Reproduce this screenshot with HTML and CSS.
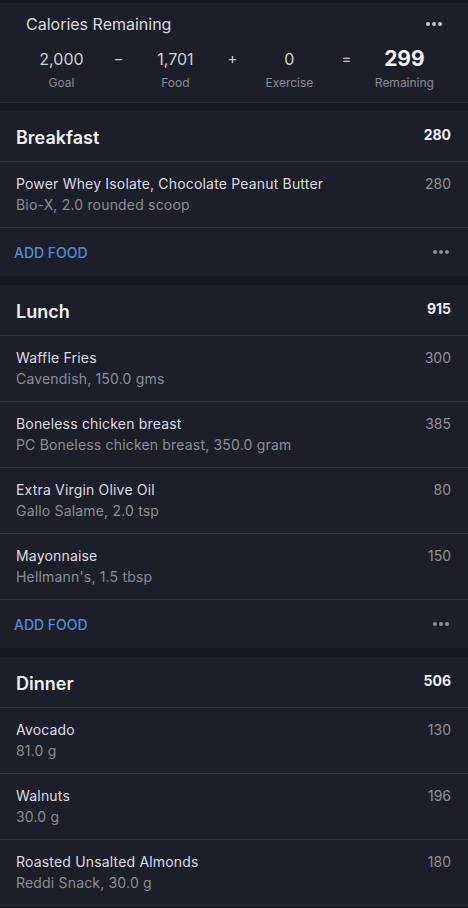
FILE: index.html
```html
<!DOCTYPE html>
<html>
<head>
<meta charset="utf-8">
<link rel="stylesheet" href="styles.css">
</head>
<body>
<div class="page">
  <section class="summary">
    <div class="summary-top">
      <span class="summary-title">Calories Remaining</span>
      <span class="dots"><i></i><i></i><i></i></span>
    </div>
    <div class="equation">
      <div class="cell"><span class="val">2,000</span><span class="lbl">Goal</span></div>
      <div class="op">−</div>
      <div class="cell"><span class="val">1,701</span><span class="lbl">Food</span></div>
      <div class="op">+</div>
      <div class="cell"><span class="val">0</span><span class="lbl">Exercise</span></div>
      <div class="op">=</div>
      <div class="cell"><span class="val big">299</span><span class="lbl">Remaining</span></div>
    </div>
  </section>

  <section class="meal">
    <div class="meal-head"><span class="meal-name">Breakfast</span><span class="meal-cal">280</span></div>
    <div class="item"><div class="item-text"><span class="item-name">Power Whey Isolate, Chocolate Peanut Butter</span><span class="item-sub">Bio-X, 2.0 rounded scoop</span></div><span class="item-cal">280</span></div>
    <div class="add-row"><span class="add">ADD FOOD</span><span class="dots small"><i></i><i></i><i></i></span></div>
  </section>

  <section class="meal">
    <div class="meal-head"><span class="meal-name">Lunch</span><span class="meal-cal">915</span></div>
    <div class="item"><div class="item-text"><span class="item-name">Waffle Fries</span><span class="item-sub">Cavendish, 150.0 gms</span></div><span class="item-cal">300</span></div>
    <div class="item"><div class="item-text"><span class="item-name">Boneless chicken breast</span><span class="item-sub">PC Boneless chicken breast, 350.0 gram</span></div><span class="item-cal">385</span></div>
    <div class="item"><div class="item-text"><span class="item-name">Extra Virgin Olive Oil</span><span class="item-sub">Gallo Salame, 2.0 tsp</span></div><span class="item-cal">80</span></div>
    <div class="item"><div class="item-text"><span class="item-name">Mayonnaise</span><span class="item-sub">Hellmann's, 1.5 tbsp</span></div><span class="item-cal">150</span></div>
    <div class="add-row"><span class="add">ADD FOOD</span><span class="dots small"><i></i><i></i><i></i></span></div>
  </section>

  <section class="meal">
    <div class="meal-head"><span class="meal-name">Dinner</span><span class="meal-cal">506</span></div>
    <div class="item"><div class="item-text"><span class="item-name">Avocado</span><span class="item-sub">81.0 g</span></div><span class="item-cal">130</span></div>
    <div class="item"><div class="item-text"><span class="item-name">Walnuts</span><span class="item-sub">30.0 g</span></div><span class="item-cal">196</span></div>
    <div class="item"><div class="item-text"><span class="item-name">Roasted Unsalted Almonds</span><span class="item-sub">Reddi Snack, 30.0 g</span></div><span class="item-cal">180</span></div>
  </section>
</div>
</body>
</html>
```

FILE: styles.css
```css
* { box-sizing: border-box; margin: 0; padding: 0; }
html, body { background: #161822; }
body {
  font-family: Inter, "Noto Sans", "Liberation Sans", sans-serif;
  color: #e4e5ea;
  width: 468px;
  height: 908px;
  overflow: hidden;
}
.page {
  padding-top: 3px;
  display: flex;
  flex-direction: column;
  gap: 8px;
}
.page > .meal + .meal { margin-top: 1px; }
.summary {
  background: #1c1e29;
  border-bottom: 1px solid #2e303b;
  height: 100px;
  padding: 12px 0 0 0;
}
.summary-top {
  display: flex;
  justify-content: space-between;
  align-items: center;
  padding: 0 26px 0 26px;
  height: 18px;
}
.summary-title {
  font-size: 16px;
  color: #d9dae0;
}
.dots { display: flex; gap: 2px; align-items: center; }
.dots i {
  display: block;
  width: 4px;
  height: 4px;
  border-radius: 50%;
  background: #c9cad1;
}
.dots.small i { background: #8d9099; width: 4px; height: 4px; }
.equation {
  display: grid;
  grid-template-columns: repeat(7, 1fr);
  padding: 0 34px 0 33px;
  margin-top: 14px;
}
.cell {
  display: flex;
  flex-direction: column;
  align-items: center;
}
.val {
  font-size: 16px;
  color: #cfd0d6;
  height: 24px;
  line-height: 24px;
}
.val.big {
  font-size: 21px;
  font-weight: 700;
  color: #f1f2f5;
}
.lbl {
  font-size: 12px;
  color: #8a8c95;
  margin-top: 4px;
}
.op {
  text-align: center;
  font-size: 15px;
  color: #c2c3ca;
  line-height: 24px;
}
.meal {
  background: #1c1e29;
}
.meal-head {
  height: 51px;
  display: flex;
  justify-content: space-between;
  padding: 0 17px 0 16px;
  border-bottom: 1px solid #2e303b;
}
.meal-name {
  font-size: 18px;
  font-weight: 600;
  color: #eeeff3;
  padding-top: 16px;
}
.meal-cal {
  font-size: 14px;
  font-weight: 700;
  color: #eeeff3;
  padding-top: 15px;
}
.item {
  height: 66px;
  display: flex;
  justify-content: space-between;
  padding: 13px 17px 0 16px;
  border-bottom: 1px solid #2e303b;
}
.item-text { display: flex; flex-direction: column; gap: 3px; }
.item-name { font-size: 14px; letter-spacing: 0.18px; color: #dcdde2; line-height: 18px; }
.item-sub { font-size: 14px; letter-spacing: 0.18px; color: #8b8e97; line-height: 18px; }
.item-cal { font-size: 14px; color: #8f929b; line-height: 18px; }
.add-row {
  height: 48px;
  display: flex;
  justify-content: space-between;
  align-items: center;
  padding: 0 19px 0 14px;
}
.add {
  font-size: 14px;
  color: #4c8fdc;
  font-weight: 500;
}
```
